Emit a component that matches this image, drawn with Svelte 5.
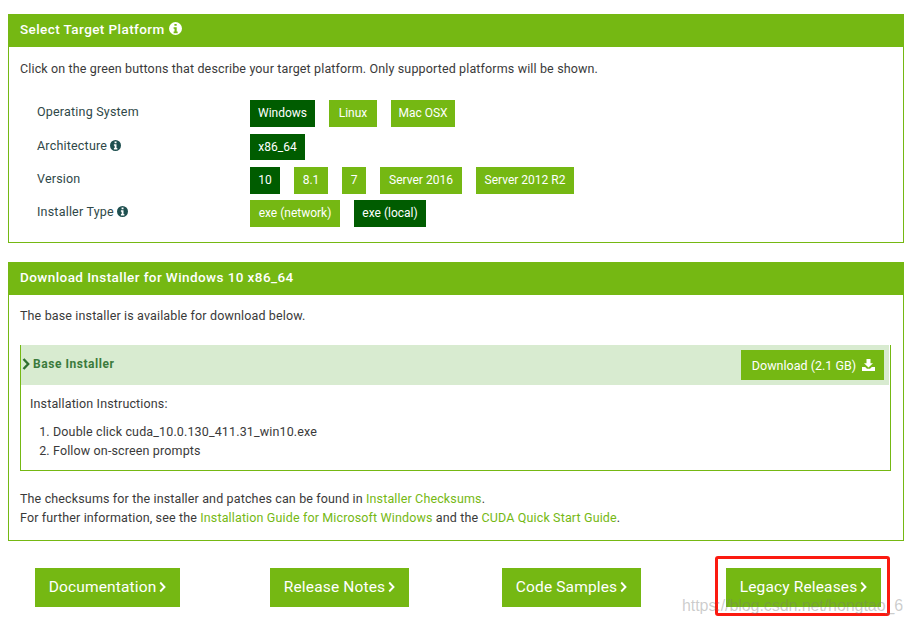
<script>
  const rows = [
    { label: 'Operating System', info: false, short: false, btns: [['Windows', 65, true], ['Linux', 48, false], ['Mac OSX', 64, false]] },
    { label: 'Architecture', info: true, short: true, btns: [['x86_64', 55, true]] },
    { label: 'Version', info: false, short: false, btns: [['10', 30, true], ['8.1', 34, false], ['7', 24, false], ['Server 2016', 82, false], ['Server 2012 R2', 98, false]] },
    { label: 'Installer Type', info: true, short: false, btns: [['exe (network)', 90, false], ['exe (local)', 72, true]] }
  ];
  const links = [['Documentation', 145, 235], ['Release Notes', 139, 232], ['Code Samples', 139, 224]];
</script>

{#snippet info(size)}
  <svg class="info" width={size} height={size} viewBox="0 0 24 24" aria-hidden="true">
    <path fill-rule="evenodd" fill="currentColor" d="M12 0a12 12 0 1 0 0 24a12 12 0 0 0 0-24zM10 3.5h4.200v3.600H10zM8.500 9.500h5.700v8.200h1.800v3H8.500v-3h1.700v-5.100H8.500z"/>
  </svg>
{/snippet}

{#snippet chevron()}
  <svg class="chev" width="7" height="12" viewBox="0 0 7 12" aria-hidden="true">
    <path d="M1.200 1.500L5.500 6L1.200 10.500" fill="none" stroke="currentColor" stroke-width="1.900"/>
  </svg>
{/snippet}

<main class="page">
  <section class="panel first">
    <h2 class="head">Select Target Platform {@render info(13)}</h2>
    <div class="body">
      <p class="intro">Click on the green buttons that describe your target platform. Only supported platforms will be shown.</p>
      <div class="matrix">
        {#each rows as row}
          <div class="label">{row.label}{#if row.info} {@render info(11)}{/if}</div>
          <div class="opts">
            {#each row.btns as [text, w, active]}
              <span class="opt" class:active class:short={row.short} style:width="{w}px">{text}</span>
            {/each}
          </div>
        {/each}
      </div>
    </div>
  </section>

  <section class="panel second">
    <h2 class="head">Download Installer for Windows 10 x86_64</h2>
    <div class="body">
      <p class="intro base">The base installer is available for download below.</p>
      <div class="accordion">
        <div class="acc-head">
          <div class="acc-title">
            <svg width="8" height="12" viewBox="0 0 8 12" aria-hidden="true"><path d="M1.500 1L6.200 6L1.500 11" fill="none" stroke="#2f7030" stroke-width="2.400"/></svg>
            <strong>Base Installer</strong>
          </div>
          <span class="dl">Download (2.1 GB)
            <svg width="13" height="12" viewBox="0 0 13 12" aria-hidden="true">
              <path fill="currentColor" d="M4.500 0h4v4.200h2.500L6.500 8.500L2 4.200h2.500zM0 8h3.200L5 9.800h3L9.800 8H13v4H0z"/>
            </svg>
          </span>
        </div>
        <div class="acc-body">
          <p>Installation Instructions:</p>
          <ol>
            <li>Double click cuda_10.0.130_411.31_win10.exe</li>
            <li>Follow on-screen prompts</li>
          </ol>
        </div>
      </div>
      <p class="notes">The checksums for the installer and patches can be found in <a href="#a">Installer Checksums</a>.<br />For further information, see the <a href="#b">Installation Guide for Microsoft Windows</a> and the <a href="#c">CUDA Quick Start Guide</a>.</p>
    </div>
  </section>

  <nav class="links">
    {#each links as [text, w, gap]}
      <a class="big" href="#l" style:width="{w}px" style:margin-right="{gap - w}px">{text} {@render chevron()}</a>
    {/each}
    <a class="big legacy" href="#l">Legacy Releases {@render chevron()}</a>
  </nav>
  <div class="frame"></div>
  <div class="mark">https://blog.csdn.net/hongtao_6</div>
</main>

<style>
  :global(body) { margin: 0; background: #fff; }
  .page {
    position: relative;
    width: 912px;
    height: 624px;
    overflow: hidden;
    padding: 14px 8px 0;
    box-sizing: border-box;
    font-family: Roboto, "Liberation Sans", sans-serif;
    font-size: 12.500px;
    letter-spacing: 0.14px;
    color: #3a3a3a;
  }
  .panel { border: 1px solid #75b813; border-top: 0; }
  .first { height: 229px; box-sizing: border-box; margin-bottom: 19px; }
  .second { height: 279px; box-sizing: border-box; }
  .head {
    margin: 0 -1px;
    height: 33px;
    padding: 0 0 4px 12px;
    box-sizing: border-box;
    display: flex;
    align-items: center;
    gap: 4px;
    background: #75b813;
    color: #fff;
    font-size: 13.500px;
    font-weight: 500;
    letter-spacing: 0.42px;
  }
  .body { padding: 0 12px 0 11px; }
  .intro { margin: 0; padding-top: 14px; height: 38px; line-height: 15px; }
  .matrix {
    display: grid;
    grid-template-columns: 213px 1fr;
    grid-template-rows: 28px 27px 27px 27px;
    row-gap: 6px;
    margin: 1px 0 0 17px;
  }
  .label { display: flex; align-items: center; gap: 3px; height: 23px; color: #2f4848; letter-spacing: 0.2px; }
  .info { flex: none; color: #1e4f4f; }
  .head .info { color: #fff; }
  .opts { display: flex; gap: 14px; align-items: flex-start; }
  .opt {
    height: 27px;
    padding-bottom: 1px;
    box-sizing: border-box;
    display: flex;
    align-items: center;
    justify-content: center;
    background: #75b813;
    color: #fff;
    font-size: 12px;
    letter-spacing: 0;
  }
  .opt.short { height: 26px; }
  .opt.active { background: #005c00; }
  .base { height: 37px; padding-top: 13px; }
  .accordion {
    border: 1px solid #75b813;
    border-top: 0;
    height: 126px;
    box-sizing: border-box;
  }
  .acc-head {
    height: 40px;
    margin-right: 1px;
    background: #d8ebd0;
    display: flex;
    align-items: center;
    justify-content: space-between;
    padding-right: 5px;
  }
  .acc-title { display: flex; align-items: center; gap: 3px; color: #3b7a3c; padding-left: 1px; margin-top: -2px; }
  .acc-title strong { font-weight: 700; font-size: 12px; letter-spacing: 0.55px; }
  .dl {
    width: 143px;
    height: 30px;
    padding-left: 2px;
    display: flex;
    align-items: center;
    justify-content: center;
    gap: 6px;
    background: #75b813;
    color: #fff;
    font-size: 12.500px;
    letter-spacing: 0.02px;
    box-sizing: border-box;
  }
  .acc-body { padding: 11px 0 0 9px; }
  .acc-body p { margin: 0; line-height: 15px; }
  .acc-body ol { margin: 11px 0 0; padding-left: 23px; }
  .acc-body li { line-height: 19px; }
  .notes { margin: 18px 0 0; line-height: 19px; }
  .notes a { color: #75b813; text-decoration: none; }
  .links {
    display: flex;
    margin: 27px 0 0 27px;
    align-items: flex-start;
  }
  .big {
    height: 39px;
    padding-bottom: 2px;
    display: flex;
    align-items: center;
    justify-content: center;
    gap: 3px;
    background: #75b813;
    color: #fff;
    font-size: 15.500px;
    letter-spacing: 0.15px;
    text-decoration: none;
    flex: none;
    box-sizing: border-box;
  }
  .legacy { width: 155px; }
  .frame {
    position: absolute;
    left: 715px;
    top: 556px;
    width: 175px;
    height: 60px;
    box-sizing: border-box;
    border: 3px solid #fb1a10;
    border-radius: 3px;
  }
  .mark {
    position: absolute;
    left: 682px;
    top: 597px;
    font-family: "Liberation Sans", sans-serif;
    font-size: 16px;
    letter-spacing: -0.07px;
    color: rgba(120, 120, 120, 0.38);
    white-space: nowrap;
  }
</style>
